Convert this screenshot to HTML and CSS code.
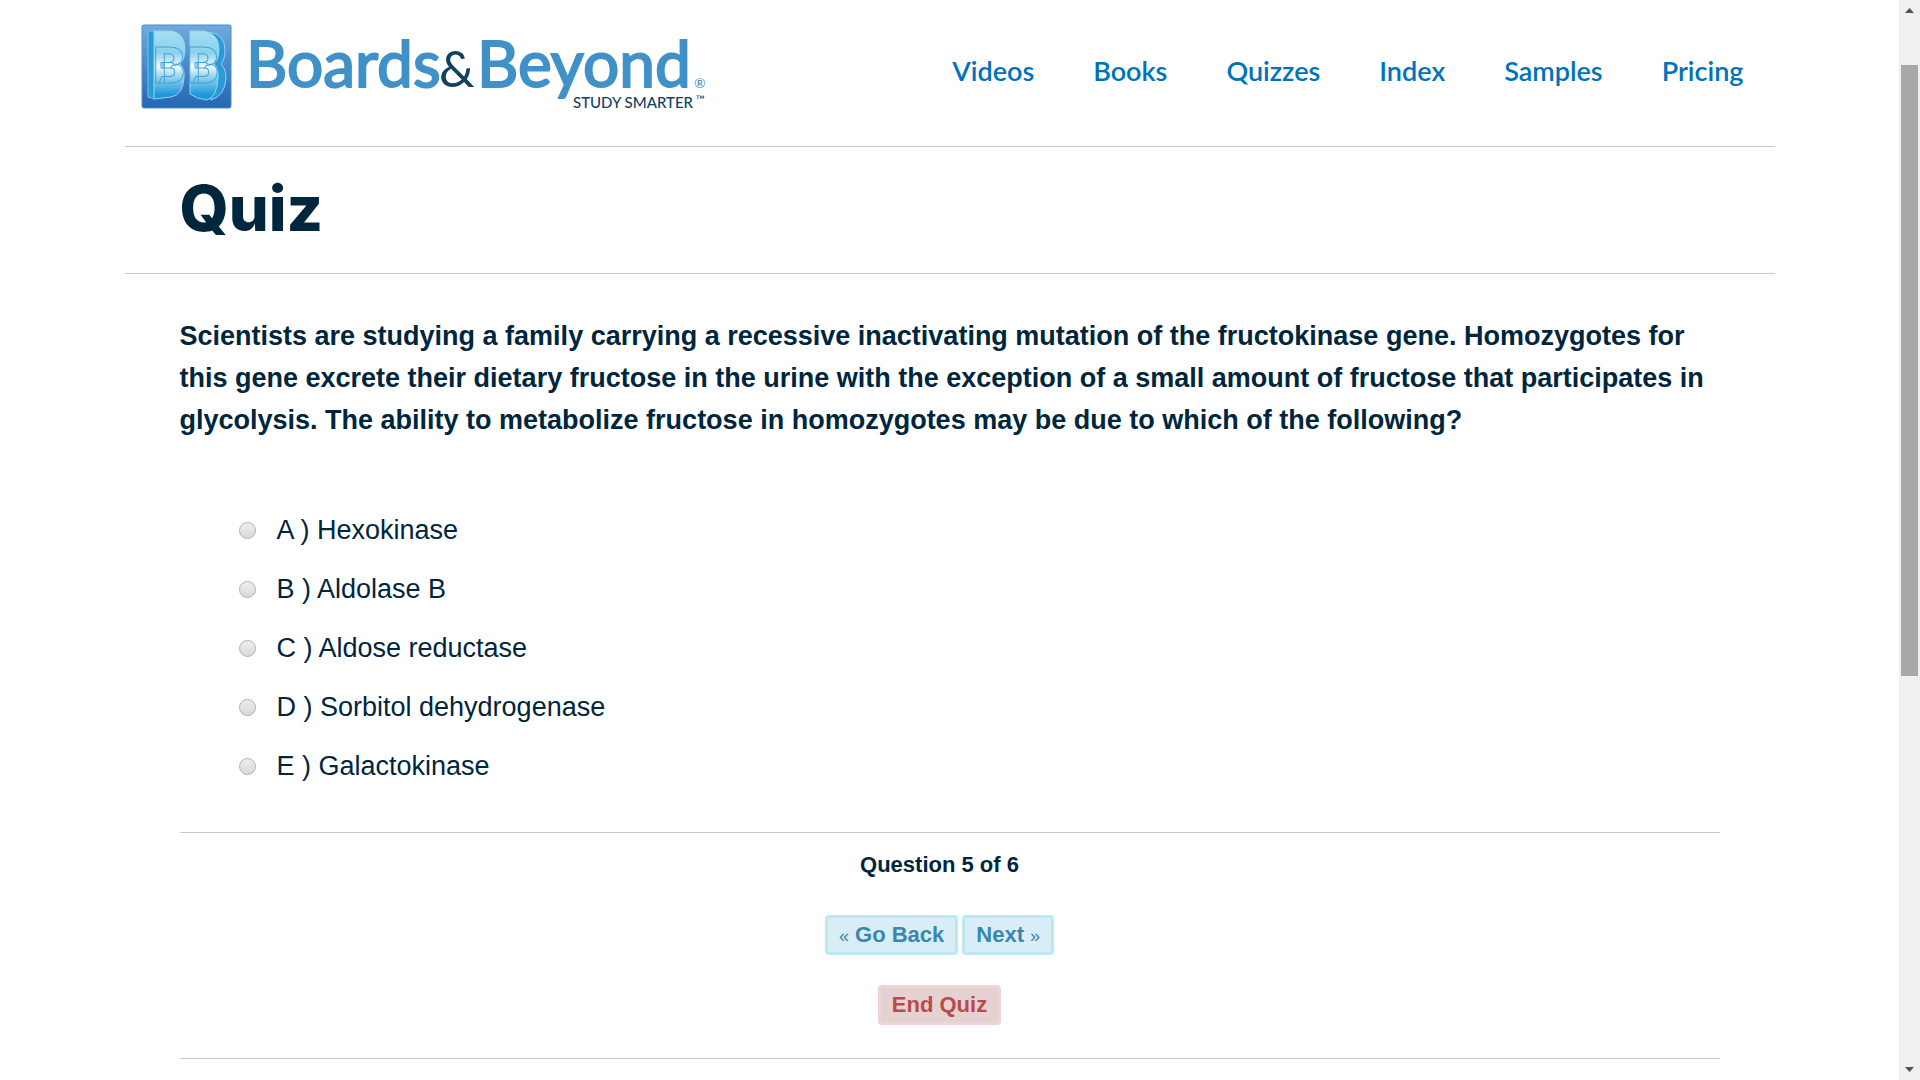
FILE: index.html
```html
<!DOCTYPE html>
<html lang="en">
<head>
<meta charset="utf-8">
<meta name="viewport" content="width=device-width, initial-scale=1">
<title>Quiz - Boards &amp; Beyond</title>
<link rel="stylesheet" href="styles.css">
</head>
<body>
<div class="page">
  <header class="site-header">
    <a class="logo" href="#" aria-label="Boards and Beyond">
      <svg width="580" height="92" viewBox="0 0 580 92">
        <defs>
          <linearGradient id="tile" x1="0" y1="0" x2="0" y2="1">
            <stop offset="0" stop-color="#70aadd"/>
            <stop offset="1" stop-color="#2367b2"/>
          </linearGradient>
          <linearGradient id="shine" gradientUnits="userSpaceOnUse" x1="0" y1="12" x2="0" y2="82">
            <stop offset="0" stop-color="#a5def2"/>
            <stop offset="0.3" stop-color="#8bd0ee"/>
            <stop offset="0.5" stop-color="#f4fbff"/>
            <stop offset="0.62" stop-color="#a3d6f0"/>
            <stop offset="0.9" stop-color="#1b98d8"/>
          </linearGradient>
        </defs>
        <rect x="3" y="5" width="89" height="83" rx="2" fill="url(#tile)" stroke="#4a8dcc"/>
        <path d="M9 11h7v68l-7-2z" fill="#2b9bd8" stroke="#74c3ea"/>
        <path d="M70 12q16 2 16 18 0 10-4 14 5 5 5 14-1 18-15 22z" fill="#2b9bd8" stroke="#8ed5f0"/>
        <path d="M15 11h18q13 3 13 18 0 10-5 15 5 5 4 14-1 17-13 19l-17 2z" fill="url(#shine)" stroke="#8ed5f0"/>
        <path d="M51 11h14q15 3 15 18 0 10-5 15 5 5 4 14-1 19-11 22-10-1-17-6z" fill="url(#shine)" stroke="#8ed5f0"/>
        <g class="mark" fill="url(#shine)" stroke="#3fa5dc">
          <text x="14" y="63">B</text>
          <text x="48" y="63">B</text>
        </g>
        <text class="word" x="107" y="67">Boards</text>
        <text class="amp" x="300" y="67">&amp;</text>
        <text class="word" x="338" y="67">Beyond</text>
        <text class="reg" x="555" y="68">®</text>
        <text class="tagline" x="434" y="88">STUDY SMARTER</text>
        <text class="tm" x="557" y="84">™</text>
      </svg>
    </a>
    <nav class="nav">
      <a href="#">Videos</a>
      <a href="#">Books</a>
      <a href="#">Quizzes</a>
      <a href="#">Index</a>
      <a href="#">Samples</a>
      <a href="#">Pricing</a>
    </nav>
  </header>
  <div class="title-bar"><h1>Quiz</h1></div>
  <main class="content">
    <form class="quiz">
      <fieldset class="question">
        <legend>Scientists are studying a family carrying a recessive inactivating mutation of the fructokinase gene. Homozygotes for<br> this gene excrete their dietary fructose in the urine with the exception of a small amount of fructose that participates in<br> glycolysis. The ability to metabolize fructose in homozygotes may be due to which of the following?</legend>
        <div class="options">
          <label><input type="radio" name="answer" value="a"><span>A ) Hexokinase</span></label>
          <label><input type="radio" name="answer" value="b"><span>B ) Aldolase B</span></label>
          <label><input type="radio" name="answer" value="c"><span>C ) Aldose reductase</span></label>
          <label><input type="radio" name="answer" value="d"><span>D ) Sorbitol dehydrogenase</span></label>
          <label><input type="radio" name="answer" value="e"><span>E ) Galactokinase</span></label>
        </div>
      </fieldset>
      <div class="controls">
        <p class="progress">Question 5 of 6</p>
        <div class="steps">
          <button type="button" class="btn btn-step"><span class="chevron">«</span> Go Back</button>
          <button type="button" class="btn btn-step">Next <span class="chevron">»</span></button>
        </div>
        <button type="button" class="btn btn-end">End Quiz</button>
      </div>
    </form>
  </main>
</div>
<div class="scrollbar" aria-hidden="true">
  <svg width="9" height="5" viewBox="0 0 9 5"><path d="M0 5 4.500 0 9 5z" fill="#505050"/></svg>
  <div class="track"><div class="thumb"></div></div>
  <svg width="9" height="5" viewBox="0 0 9 5"><path d="M0 0H9L4.500 5z" fill="#505050"/></svg>
</div>
</body>
</html>
```
FILE: styles.css
```css
* { box-sizing: border-box; }

body {
  margin: 0;
  display: grid;
  grid-template-columns: 1fr 21px;
  min-height: 100vh;
  background: #fff;
  color: #00263e;
  font-family: "Liberation Sans", Arial, sans-serif;
}

.page {
  width: 100%;
  max-width: 1650px;
  margin: 0 auto;
}

.site-header {
  display: flex;
  justify-content: space-between;
  padding: 20px 31px 34px 14px;
  border-bottom: 1px solid #c8c8c8;
}

.logo svg { display: block; }
.mark { font: 900 50px Roboto, sans-serif; }
.word { font: 64px Lato, sans-serif; fill: #4191c9; stroke: #4191c9; stroke-width: 2px; }
.amp { font: 50px Lato, sans-serif; fill: #12405f; }
.reg { font: 14px Lato, sans-serif; fill: #4191c9; }
.tagline { font: 500 15px Lato, sans-serif; fill: #12405f; }
.tm { font: 12px Lato, sans-serif; fill: #12405f; }

.nav {
  display: flex;
  gap: 59px;
  padding-top: 33px;
}

.nav a {
  color: #0072bc;
  font: 600 27px/36px Lato, sans-serif;
  text-decoration: none;
}

.title-bar {
  padding: 25px 55px 29px;
  border-bottom: 1px solid #c8c8c8;
}

h1 {
  margin: 0;
  font: 800 63px/72px Inter, sans-serif;
}

.content { padding: 41px 55px 0; }

.question {
  margin: 0;
  padding: 0;
  border: 0;
}

legend {
  padding: 0;
  font-size: 27px;
  font-weight: 700;
  line-height: 42px;
}

.options {
  display: flex;
  flex-direction: column;
  gap: 17px;
  padding: 68px 0 45px 59px;
}

.options label {
  display: flex;
  align-items: center;
  gap: 21px;
  font-size: 27px;
  line-height: 42px;
}

.options input {
  appearance: none;
  width: 17px;
  height: 17px;
  margin: 0;
  border: 1px solid #b0b0b0;
  border-radius: 50%;
  background: linear-gradient(#eee, #d9d9d9);
}

.controls {
  display: flex;
  flex-direction: column;
  align-items: center;
  gap: 30px;
  padding: 14px 20px 33px 0;
  border-top: 1px solid #c8c8c8;
  border-bottom: 1px solid #c8c8c8;
}

.progress {
  margin: 0 0 2px;
  font-size: 22px;
  font-weight: 700;
  line-height: 36px;
}

.steps { display: flex; gap: 4px; }

.btn {
  height: 40px;
  padding: 0 11px;
  border: 3px solid;
  border-radius: 4px;
  font: 700 22px/34px "Liberation Sans", Arial, sans-serif;
}

.btn-step { background: #d9edf7; border-color: #bce8f1; color: #3a87ad; }
.btn-end { background: #e5d1d1; border-color: #eed3d7; color: #b94a48; }
.chevron { font-size: 18px; font-weight: 400; }

.scrollbar {
  position: sticky;
  top: 0;
  display: flex;
  flex-direction: column;
  align-items: center;
  height: 100vh;
  padding: 8px 2px;
  background: #f0f0f0;
}

.track {
  flex: 1;
  width: 17px;
  padding-top: 52px;
}

.thumb { height: 61%; background: #a8a8a8; }
```
